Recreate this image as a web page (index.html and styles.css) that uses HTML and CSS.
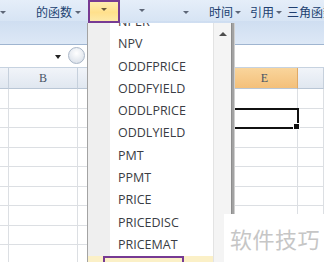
FILE: index.html
```html
<!DOCTYPE html>
<html>
<head>
<meta charset="utf-8">
<link rel="stylesheet" href="styles.css">
</head>
<body>
<div class="screen">
  <div class="ribbon">
    <span class="tri t0"></span>
    <span class="lbl l1">的函数</span>
    <span class="tri t1"></span>
    <span class="btn"><span class="tri tb"></span></span>
    <span class="tri t2"></span>
    <span class="tri t3"></span>
    <span class="lbl l2">时间</span>
    <span class="tri t4"></span>
    <span class="lbl l3">引用</span>
    <span class="tri t4"></span>
    <span class="lbl l4">三角函数</span>
  </div>
  <div class="band"></div>
  <div class="fbar">
    <div class="namebox"><span class="nb-arrow"></span></div>
    <div class="circ"></div>
  </div>
  <div class="sheet">
    <div class="row hdr">
      <div class="c"></div><div class="c">B</div><div class="c"></div><div class="c"></div><div class="c on">E</div><div class="c"></div>
    </div>
    <div class="row"><div class="c"></div><div class="c"></div><div class="c"></div><div class="c"></div><div class="c"></div><div class="c"></div></div>
    <div class="row"><div class="c"></div><div class="c"></div><div class="c"></div><div class="c"></div><div class="c sel"></div><div class="c"></div></div>
    <div class="row"><div class="c"></div><div class="c"></div><div class="c"></div><div class="c"></div><div class="c"></div><div class="c"></div></div>
    <div class="row"><div class="c"></div><div class="c"></div><div class="c"></div><div class="c"></div><div class="c"></div><div class="c"></div></div>
    <div class="row"><div class="c"></div><div class="c"></div><div class="c"></div><div class="c"></div><div class="c"></div><div class="c"></div></div>
    <div class="row"><div class="c"></div><div class="c"></div><div class="c"></div><div class="c"></div><div class="c"></div><div class="c"></div></div>
    <div class="row"><div class="c"></div><div class="c"></div><div class="c"></div><div class="c"></div><div class="c"></div><div class="c"></div></div>
    <div class="row"><div class="c"></div><div class="c"></div><div class="c"></div><div class="c"></div><div class="c"></div><div class="c"></div></div>
    <div class="row"><div class="c"></div><div class="c"></div><div class="c"></div><div class="c"></div><div class="c"></div><div class="c"></div></div>
  </div>

  <div class="menu">
    <div class="list">
      <div class="list-inner">
        <div class="item">NPER</div>
        <div class="item">NPV</div>
        <div class="item">ODDFPRICE</div>
        <div class="item">ODDFYIELD</div>
        <div class="item">ODDLPRICE</div>
        <div class="item">ODDLYIELD</div>
        <div class="item">PMT</div>
        <div class="item">PPMT</div>
        <div class="item">PRICE</div>
        <div class="item">PRICEDISC</div>
        <div class="item">PRICEMAT</div>
        <div class="item hot">PV</div>
      </div>
    </div>
    <div class="sb"><span class="up"></span></div>
  </div>

  <div class="wm">软件技巧</div>
</div>
</body>
</html>
```

FILE: styles.css
```css
* { box-sizing: border-box; margin: 0; padding: 0; }
html, body { width: 324px; height: 262px; overflow: hidden; background: #fff; }
body { font-family: "Open Sans", "Noto Sans CJK SC", sans-serif; }

.screen { position: relative; width: 324px; height: 262px; overflow: hidden; }

/* ribbon */
.ribbon {
  height: 21px;
  display: flex;
  align-items: flex-start;
  padding-top: 5px;
  background: linear-gradient(#e5eef9, #d7e4f4);
  white-space: nowrap;
  font-family: "Noto Sans CJK SC", sans-serif;
  font-size: 12px;
  line-height: 14px;
  color: #203f70;
}
.lbl { flex: none; }
.tri {
  flex: none;
  width: 0; height: 0;
  border-left: 3px solid transparent;
  border-right: 3px solid transparent;
  border-top: 3px solid #5d6677;
  margin-top: 6px;
}
.t0 { margin-left: 0; }
.l1 { margin-left: 30px; }
.t1 { margin-left: 3px; }
.btn {
  position: relative;
  z-index: 3;
  flex: none;
  margin-left: 7px;
  margin-top: -5px;
  width: 32px;
  height: 23px;
  border: 2px solid #773b93;
  background: linear-gradient(#ffedb0, #ffe08c 55%, #fde9a9);
  display: flex;
  justify-content: center;
  padding-top: 6px;
}
.tb { margin-top: 0; border-top-color: #6b5a3a; }
.t2 { margin-left: 19px; margin-top: 4px; }
.t3 { margin-left: 38px; }
.l2 { margin-left: 20px; }
.t4 { margin-left: 2px; }
.l3 { margin-left: 9px; }
.l4 { margin-left: 5px; }

.band {
  height: 23px;
  background: linear-gradient(#cfdef1, #dde8f6);
}

/* formula bar */
.fbar {
  height: 24px;
  display: flex;
  border-top: 1px solid #9fb5d0;
  border-bottom: 1px solid #c6d2e0;
  background: #fff;
}
.namebox { width: 66px; display: flex; padding-left: 55px; padding-top: 10px; }
.nb-arrow {
  width: 0; height: 0;
  border-left: 3px solid transparent;
  border-right: 3px solid transparent;
  border-top: 4px solid #222;
}
.circ {
  width: 17px; height: 17px;
  margin-left: 2px; margin-top: 2px;
  border-radius: 50%;
  border: 1px solid #a9b6c7;
  background: radial-gradient(circle at 50% 35%, #ffffff, #d3dbe6);
}

/* sheet */
.row {
  display: grid;
  grid-template-columns: 9px 69px 78px 76px 66px 1fr;
  height: 19.5px;
}
.c { border-right: 1px solid #dcdfe3; border-bottom: 1px solid #dcdfe3; }
.hdr { height: 21px; }
.hdr .c {
  background: linear-gradient(#f1f4f9, #e0e7f0);
  border-right-color: #c6d0dc;
  border-bottom-color: #b9c6d5;
  font-family: "Liberation Serif", serif;
  font-size: 12px;
  line-height: 20px;
  text-align: center;
  color: #475365;
}
.hdr .c.on { background: linear-gradient(#f9d59c, #f4c07a); border-right-color: #e0aa66; }
.sel { position: relative; outline: 2px solid #111; outline-offset: -1px; }
.sel::after {
  content: "";
  position: absolute;
  right: -3px; bottom: -3px;
  width: 5px; height: 5px;
  background: #111;
  border: 1px solid #fff;
}

/* dropdown menu */
.menu {
  position: absolute;
  left: 87px; top: 23px;
  width: 145px; height: 239px;
  display: flex;
  border-left: 1px solid #a3a3a3;
  border-right: 1px solid #8d8d8d;
  box-shadow: 2px 0 0 #a2a2a2, 3px 0 0 #cfcfcf;
  z-index: 2;
}
.list {
  flex: 1;
  overflow: hidden;
  background: linear-gradient(to right, #efefef 0 22px, #fff 22px);
}
.list-inner { margin-top: -12px; }
.item {
  height: 22.3px;
  line-height: 22.3px;
  padding-left: 30px;
  font-family: "Open Sans", sans-serif;
  font-size: 12.5px;
  color: #3a3d44;
  white-space: nowrap;
}
.item.hot { position: relative; background: #fbf0c7; }
.item.hot::after {
  content: "";
  position: absolute;
  left: 15px; top: 0;
  width: 77px; height: 20px;
  border: 2px solid #763a93;
}
.sb {
  width: 18px;
  background: #f4f4f4;
  border-left: 1px solid #e3e3e3;
  display: flex;
  justify-content: center;
  padding-top: 9px;
}
.up {
  width: 0; height: 0;
  border-left: 4px solid transparent;
  border-right: 4px solid transparent;
  border-bottom: 4px solid #4d4d4d;
}

/* watermark */
.wm {
  position: absolute;
  left: 224px; top: 214px;
  width: 100px; height: 48px;
  background: #fff;
  padding: 12px 0 0 6px;
  font-family: "Noto Sans CJK SC", sans-serif;
  font-size: 22px;
  line-height: 24px;
  letter-spacing: 0.5px;
  color: #c6c6c6;
  z-index: 4;
}
```
